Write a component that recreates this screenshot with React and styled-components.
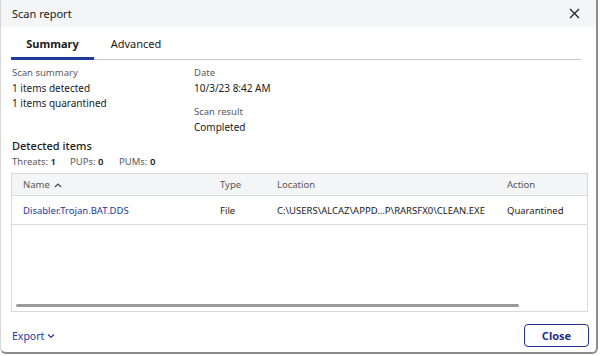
import React from "react";
import styled, { createGlobalStyle } from "styled-components";

const Global = createGlobalStyle`
  html, body { margin: 0; padding: 0; background: #ffffff; }
  body { font-family: "Noto Sans", "Open Sans", sans-serif; color: #1c1c1c; }
  * { box-sizing: border-box; }
`;

const Dialog = styled.div`
  width: 598px;
  height: 354px;
  background: #fff;
  border-left: 1px solid #d6d6d6;
  border-right: 2px solid #8c8c8c;
  border-bottom: 2px solid #8c8c8c;
  border-radius: 0 0 6px 6px;
  display: flex;
  flex-direction: column;
  overflow: hidden;
`;

const Header = styled.div`
  height: 27px;
  background: #f4f5f7;
  display: flex;
  align-items: center;
  justify-content: space-between;
  padding: 0 16px 0 11px;
  font-size: 11px;
  color: #1a1a1a;
`;

const CloseX = styled.button`
  border: none;
  background: none;
  padding: 0;
  display: flex;
  cursor: pointer;
`;

const Body = styled.div`
  flex: 1;
  display: flex;
  flex-direction: column;
  padding: 0 11px 0 10px;
`;

const Tabs = styled.div`
  display: flex;
  border-bottom: 1px solid #c8c8c8;
  height: 33px;
  margin-right: 4px;
`;

const Tab = styled.div`
  width: ${(p) => p.$w}px;
  display: flex;
  align-items: center;
  justify-content: center;
  font-size: 11px;
  font-weight: ${(p) => (p.$active ? 700 : 400)};
  color: #1a1a1a;
  border-bottom: 3px solid ${(p) => (p.$active ? "#1f3a9c" : "transparent")};
  margin-bottom: -1px;
  padding-top: 2px;
`;

const Summary = styled.div`
  display: grid;
  grid-template-columns: 182px 1fr;
  padding: 6px 1px 0;
`;

const Col = styled.div`
  display: flex;
  flex-direction: column;
`;

const Label = styled.div`
  font-size: 9.5px;
  color: #5a5a5a;
  line-height: 13px;
  margin-top: ${(p) => p.$mt || 0}px;
`;

const Value = styled.div`
  font-size: 10px;
  color: #1a1a1a;
  line-height: 15px;
  margin-top: ${(p) => p.$mt || 0}px;
`;

const SectionTitle = styled.div`
  font-size: 11px;
  font-weight: 500;
  color: #1a1a1a;
  margin-top: 3px;
  padding-left: 1px;
  line-height: 16px;
`;

const Counts = styled.div`
  display: flex;
  font-size: 9.5px;
  color: #5a5a5a;
  padding-left: 1px;
  line-height: 16px;
`;

const Count = styled.span`
  width: ${(p) => p.$w}px;
  b { font-weight: 600; color: #1a1a1a; }
`;

const Table = styled.div`
  margin-top: 3px;
  width: 577px;
  height: 139px;
  border: 1px solid #d9d9d9;
  display: flex;
  flex-direction: column;
`;

const Row = styled.div`
  display: grid;
  grid-template-columns: 197px 57px 230px 1fr;
  align-items: center;
  padding-left: 11px;
  height: ${(p) => p.$h}px;
  background: ${(p) => (p.$head ? "#f4f5f7" : "#fff")};
  border-bottom: 1px solid #dcdcdc;
  font-size: 9.5px;
  color: ${(p) => (p.$head ? "#555" : "#1a1a1a")};
`;

const Cell = styled.div`
  white-space: nowrap;
  display: flex;
  align-items: center;
  gap: 4px;
  color: ${(p) => p.$color || "inherit"};
`;

const Spacer = styled.div`
  flex: 1;
  display: flex;
  align-items: flex-end;
  padding: 0 0 4px 4px;
`;

const Scrollbar = styled.div`
  width: 503px;
  height: 3px;
  border-radius: 2px;
  background: #9a9a9a;
`;

const Footer = styled.div`
  display: flex;
  align-items: center;
  justify-content: space-between;
  padding: 12px 0 0 1px;
  width: 578px;
`;

const ExportLink = styled.div`
  display: flex;
  align-items: center;
  gap: 3px;
  font-size: 10.5px;
  color: #23399c;
`;

const CloseButton = styled.button`
  width: 65px;
  height: 23px;
  border: 1px solid #1f2f8a;
  border-radius: 4px;
  background: #fff;
  color: #1f2f8a;
  font-family: inherit;
  font-size: 11px;
  font-weight: 700;
  padding: 0;
`;

export default function App() {
  return (
    <>
      <Global />
      <Dialog>
        <Header>
          <span>Scan report</span>
          <CloseX aria-label="close">
            <svg width="11" height="11" viewBox="0 0 11 11">
              <path d="M1 1 L10 10 M10 1 L1 10" stroke="#222" strokeWidth="1.3" />
            </svg>
          </CloseX>
        </Header>
        <Body>
          <Tabs>
            <Tab $active $w={83}>Summary</Tab>
            <Tab $w={84}>Advanced</Tab>
          </Tabs>
          <Summary>
            <Col>
              <Label>Scan summary</Label>
              <Value $mt={2}>1 items detected</Value>
              <Value>1 items quarantined</Value>
            </Col>
            <Col>
              <Label>Date</Label>
              <Value $mt={2}>10/3/23 8:42 AM</Value>
              <Label $mt={9}>Scan result</Label>
              <Value $mt={2}>Completed</Value>
            </Col>
          </Summary>
          <SectionTitle>Detected items</SectionTitle>
          <Counts>
            <Count $w={58}>Threats: <b>1</b></Count>
            <Count $w={49}>PUPs: <b>0</b></Count>
            <Count $w={60}>PUMs: <b>0</b></Count>
          </Counts>
          <Table>
            <Row $head $h={22}>
              <Cell>
                Name
                <svg width="8" height="6" viewBox="0 0 8 6">
                  <path d="M1 5 L4 2 L7 5" stroke="#444" strokeWidth="1.2" fill="none" />
                </svg>
              </Cell>
              <Cell>Type</Cell>
              <Cell>Location</Cell>
              <Cell>Action</Cell>
            </Row>
            <Row $h={29}>
              <Cell $color="#23399c">Disabler.Trojan.BAT.DDS</Cell>
              <Cell>File</Cell>
              <Cell>C:\USERS\ALCAZ\APPD...P\RARSFX0\CLEAN.EXE</Cell>
              <Cell>Quarantined</Cell>
            </Row>
            <Spacer>
              <Scrollbar />
            </Spacer>
          </Table>
          <Footer>
            <ExportLink>
              Export
              <svg width="8" height="6" viewBox="0 0 8 6">
                <path d="M1 1.5 L4 4.5 L7 1.5" stroke="#23399c" strokeWidth="1.2" fill="none" />
              </svg>
            </ExportLink>
            <CloseButton>Close</CloseButton>
          </Footer>
        </Body>
      </Dialog>
    </>
  );
}
